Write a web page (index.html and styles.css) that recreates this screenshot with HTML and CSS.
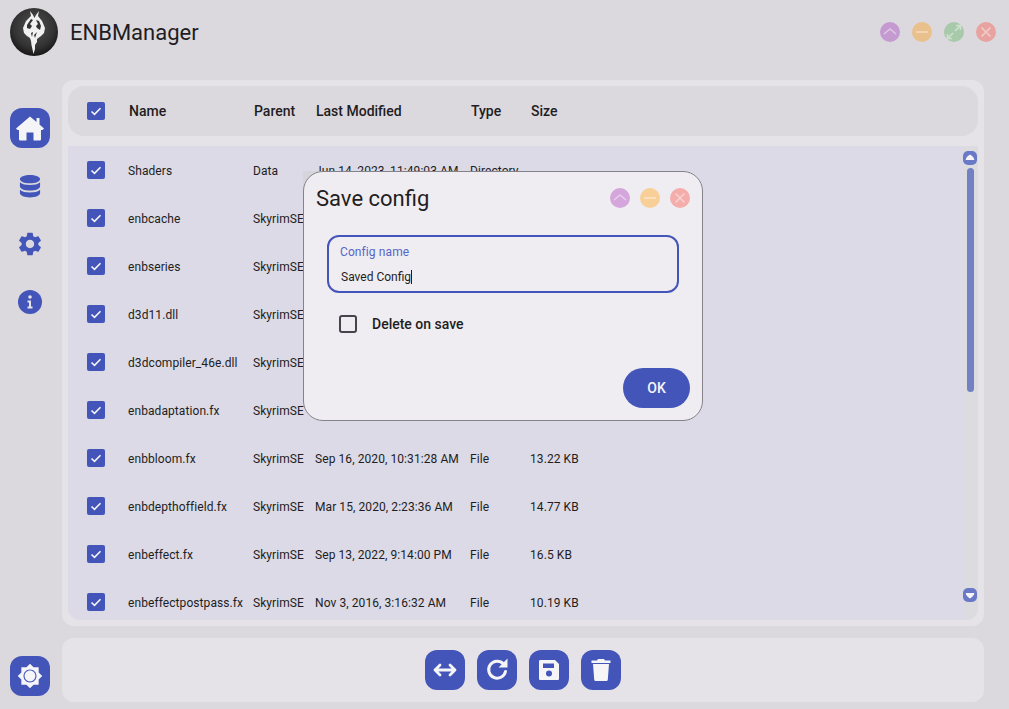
FILE: index.html
```html
<!DOCTYPE html>
<html>
  <head>
    <title>ENBManager</title>
    <meta charset="utf-8" />
    <link rel="stylesheet" href="styles.css">
  </head>
  <body>
    <div class="app">

      <!-- title bar -->
      <div class="titlebar">
        <svg class="logo" viewBox="0 0 48 48">
          <defs>
            <radialGradient id="logoBg" cx="50%" cy="40%" r="60%">
              <stop offset="0" stop-color="#525252"/>
              <stop offset="0.7" stop-color="#333333"/>
              <stop offset="1" stop-color="#171717"/>
            </radialGradient>
          </defs>
          <circle cx="24" cy="24" r="24" fill="url(#logoBg)"/>
          <path fill="#f1f1f1" d="M20 3L21 8L16 13L13 20L14 25L17 28L20 30L21 33L21.500 37L23.500 46L25 41L25 37L27 34L27 31L31 28L34 25L35 20L32 13L28 8L29 3L26 7L24.500 10L23 7Z"/>
          <path fill="#333333" d="M21 11L23 12L20 16L22 18L20 21L17 20L17 17Z"/>
          <path fill="#333333" d="M26 12L29 13L31 18L30 22L27 20L26 18L28 16Z"/>
          <path fill="#333333" d="M21 25L23 24L22 29ZM27 24L25 30L24 27Z"/>
        </svg>
        <div class="app-title">ENBManager</div>
        <div class="win-btns">
          <div class="win-btn purple"><svg viewBox="0 0 20 20"><path d="M4 12l6-5 6 5"/></svg></div>
          <div class="win-btn orange"><svg viewBox="0 0 20 20"><path d="M4 10h12"/></svg></div>
          <div class="win-btn green"><svg viewBox="0 0 20 20"><path d="M11 9l5-5M12 3.500h4.500V8M9 11l-5 5M8 16.500H3.500V12"/></svg></div>
          <div class="win-btn red"><svg viewBox="0 0 20 20"><path d="M5.500 5.500l9 9M14.500 5.500l-9 9"/></svg></div>
        </div>
      </div>

      <div class="content">
        <!-- left menu -->
        <div class="sidebar">
          <div class="nav-btn active">
            <svg width="30" height="30" viewBox="0 0 30 30"><path fill="#f5f5f7" d="M15 3.500l6.500 5.500V5h3v6.500l4.500 4-1.500 1.500H26v9c0 1-.5 1.500-1.500 1.500H18.500v-8h-7v8H5.500C4.500 27.500 4 27 4 26v-9H2.500L1 15.500z"/></svg>
          </div>
          <div class="nav-btn">
            <svg width="22" height="26" viewBox="0 0 24 26"><path fill="#4355b9" d="M12 1c6 0 11 2 11 4.500S18 10 12 10 1 8 1 5.500 6 1 12 1zM1 9c2 2.200 6.500 3 11 3s9-.8 11-3v4.500C23 16 18 18 12 18S1 16 1 13.500zM1 17c2 2.200 6.500 3 11 3s9-.8 11-3v4c0 2.500-5 4.500-11 4.500S1 23.500 1 21z"/></svg>
          </div>
          <div class="nav-btn">
            <svg width="28" height="28" viewBox="0 0 24 24"><path fill="#4355b9" d="M19.140 12.940c.04-.3.06-.61.06-.94 0-.32-.02-.64-.07-.94l2.030-1.580c.18-.14.23-.41.12-.61l-1.920-3.320c-.12-.22-.37-.29-.59-.22l-2.390.96c-.5-.38-1.030-.7-1.620-.94l-.36-2.540c-.04-.24-.24-.41-.48-.41h-3.840c-.24 0-.43.17-.47.41l-.36 2.540c-.59.24-1.130.57-1.620.94l-2.390-.96c-.22-.08-.47 0-.59.22L2.740 8.870c-.12.21-.08.47.12.61l2.030 1.580c-.05.3-.09.63-.09.94s.02.64.07.94l-2.030 1.580c-.18.14-.23.41-.12.61l1.920 3.320c.12.22.37.29.59.22l2.390-.96c.5.38 1.030.7 1.620.94l.36 2.540c.05.24.24.41.48.41h3.840c.24 0 .44-.17.47-.41l.36-2.540c.59-.24 1.130-.56 1.620-.94l2.390.96c.22.08.47 0 .59-.22l1.920-3.320c.12-.22.07-.47-.12-.61l-2.010-1.580zM12 15.600c-1.980 0-3.600-1.620-3.600-3.600s1.620-3.600 3.600-3.600 3.600 1.620 3.600 3.600-1.620 3.600-3.600 3.600z"/></svg>
          </div>
          <div class="nav-btn">
            <svg width="24" height="24" viewBox="0 0 24 24"><circle cx="12" cy="12" r="12" fill="#4355b9"/><circle cx="12" cy="7" r="1.800" fill="#e4e4ea"/><path fill="#e4e4ea" d="M9.500 10.500H13v6h1.500V18.500h-5v-2H11v-4H9.500z"/></svg>
          </div>
        </div>

        <!-- file table -->
        <div class="panel">
          <div class="table-head">
            <div class="check"><svg viewBox="0 0 18 18"><path d="M4.500 9.500l3 2.800 6-6"/></svg></div>
            <div>Name</div>
            <div>Parent</div>
            <div>Last Modified</div>
            <div>Type</div>
            <div>Size</div>
          </div>
          <div class="table-body">
            <div class="rows">
              <div class="row"><div class="check"><svg viewBox="0 0 18 18"><path d="M4.500 9.500l3 2.800 6-6"/></svg></div><div>Shaders</div><div>Data</div><div>Jun 14, 2023, 11:49:03 AM</div><div>Directory</div><div></div></div>
              <div class="row"><div class="check"><svg viewBox="0 0 18 18"><path d="M4.500 9.500l3 2.800 6-6"/></svg></div><div>enbcache</div><div>SkyrimSE</div><div></div><div></div><div></div></div>
              <div class="row"><div class="check"><svg viewBox="0 0 18 18"><path d="M4.500 9.500l3 2.800 6-6"/></svg></div><div>enbseries</div><div>SkyrimSE</div><div></div><div></div><div></div></div>
              <div class="row"><div class="check"><svg viewBox="0 0 18 18"><path d="M4.500 9.500l3 2.800 6-6"/></svg></div><div>d3d11.dll</div><div>SkyrimSE</div><div></div><div></div><div></div></div>
              <div class="row"><div class="check"><svg viewBox="0 0 18 18"><path d="M4.500 9.500l3 2.800 6-6"/></svg></div><div>d3dcompiler_46e.dll</div><div>SkyrimSE</div><div></div><div></div><div></div></div>
              <div class="row"><div class="check"><svg viewBox="0 0 18 18"><path d="M4.500 9.500l3 2.800 6-6"/></svg></div><div>enbadaptation.fx</div><div>SkyrimSE</div><div></div><div></div><div></div></div>
              <div class="row"><div class="check"><svg viewBox="0 0 18 18"><path d="M4.500 9.500l3 2.800 6-6"/></svg></div><div>enbbloom.fx</div><div>SkyrimSE</div><div>Sep 16, 2020, 10:31:28 AM</div><div>File</div><div>13.22 KB</div></div>
              <div class="row"><div class="check"><svg viewBox="0 0 18 18"><path d="M4.500 9.500l3 2.800 6-6"/></svg></div><div>enbdepthoffield.fx</div><div>SkyrimSE</div><div>Mar 15, 2020, 2:23:36 AM</div><div>File</div><div>14.77 KB</div></div>
              <div class="row"><div class="check"><svg viewBox="0 0 18 18"><path d="M4.500 9.500l3 2.800 6-6"/></svg></div><div>enbeffect.fx</div><div>SkyrimSE</div><div>Sep 13, 2022, 9:14:00 PM</div><div>File</div><div>16.5 KB</div></div>
              <div class="row"><div class="check"><svg viewBox="0 0 18 18"><path d="M4.500 9.500l3 2.800 6-6"/></svg></div><div>enbeffectpostpass.fx</div><div>SkyrimSE</div><div>Nov 3, 2016, 3:16:32 AM</div><div>File</div><div>10.19 KB</div></div>
            </div>
            <div class="scrollbar">
              <div class="scroll-btn"><svg viewBox="0 0 14 14"><path d="M7 3.500c2 1 3.500 2.800 4.200 4.500.2.600 0 1-.6 1H3.400c-.6 0-.8-.4-.6-1C3.500 6.300 5 4.500 7 3.500z"/></svg></div>
              <div class="scroll-track"><div class="scroll-thumb"></div></div>
              <div class="scroll-btn"><svg viewBox="0 0 14 14"><path d="M7 10.500c2-1 3.500-2.800 4.200-4.500.2-.6 0-1-.6-1H3.400c-.6 0-.8.4-.6 1 .7 1.700 2.200 3.500 4.200 4.500z"/></svg></div>
            </div>
          </div>
        </div>

        <div class="sidebar-bottom">
          <div class="nav-btn active">
            <svg width="26" height="26" viewBox="0 0 24 24"><path fill="#f5f5f7" d="M20 8.690V4h-4.690L12 .69 8.690 4H4v4.690L.69 12 4 15.310V20h4.690L12 23.310 15.310 20H20v-4.690L23.310 12 20 8.690zM12 18c-3.310 0-6-2.690-6-6s2.690-6 6-6 6 2.690 6 6-2.690 6-6 6zm0-11c-2.760 0-5 2.240-5 5s2.240 5 5 5 5-2.240 5-5-2.240-5-5-5z"/></svg>
          </div>
        </div>

        <!-- actions -->
        <div class="actions">
          <div class="action-btn">
            <svg width="26" height="26" viewBox="0 0 26 26"><path fill="none" stroke="#f5f5f7" stroke-width="2.800" stroke-linecap="round" stroke-linejoin="round" d="M3 13h20M8 8l-5 5 5 5M18 8l5 5-5 5"/></svg>
          </div>
          <div class="action-btn">
            <svg width="26" height="26" viewBox="0 0 26 26"><path fill="none" stroke="#f5f5f7" stroke-width="3" stroke-linecap="round" d="M19.500 7A8.500 8.500 0 1 0 21.500 14.500"/><path fill="#f5f5f7" d="M23.500 1.500v9h-9z"/></svg>
          </div>
          <div class="action-btn">
            <svg width="26" height="26" viewBox="0 0 26 26"><path fill="#f5f5f7" fill-rule="evenodd" d="M4.500 3H19l4 4v14.500c0 1-.5 1.500-1.500 1.500h-17C3.500 23 3 22.500 3 21.500v-17C3 3.500 3.500 3 4.500 3zM7 6.500v4.500h11V6.500zM13 13.500a3 3 0 1 0 0 6 3 3 0 0 0 0-6z"/></svg>
          </div>
          <div class="action-btn">
            <svg width="26" height="26" viewBox="0 0 26 26"><path fill="#f5f5f7" d="M10 2h6l1 1.500h5.500V6h-19V3.500H9zM5 7h16l-1.200 15.500c-.1 1-.8 1.500-1.500 1.500H7.700c-.7 0-1.400-.5-1.500-1.500z"/></svg>
          </div>
        </div>
      </div>

      <!-- save dialog -->
      <div class="dialog-wrap">
        <div class="dialog">
          <div class="dialog-head">
            <div class="dialog-title">Save config</div>
            <div class="win-btns small">
              <div class="win-btn purple"><svg viewBox="0 0 20 20"><path d="M4 12l6-5 6 5"/></svg></div>
              <div class="win-btn orange"><svg viewBox="0 0 20 20"><path d="M4 10h12"/></svg></div>
              <div class="win-btn red"><svg viewBox="0 0 20 20"><path d="M5.500 5.500l9 9M14.500 5.500l-9 9"/></svg></div>
            </div>
          </div>
          <div class="field">
            <div class="field-label">Config name</div>
            <div class="field-value"><span class="caret">Saved Config</span></div>
          </div>
          <div class="check-row">
            <div class="check-empty"></div>
            <div>Delete on save</div>
          </div>
          <div class="dialog-foot">
            <div class="ok-btn">OK</div>
          </div>
        </div>
      </div>

    </div>
  </body>
</html>
```

FILE: styles.css
```css
html, body {
  width: 100%;
  height: 100%;
  margin: 0px;
  overflow: hidden;
}

body {
  background-color: #dbd9de;
  color: #1f1d22;
  font-family: Roboto, "Liberation Sans", sans-serif;
}

.app {
  position: relative;
  width: 1009px;
  height: 709px;
}

/* title bar */
.titlebar {
  display: flex;
  align-items: center;
  height: 64px;
  margin-bottom: 16px;
  padding-left: 10px;
  padding-right: 13px;
  box-sizing: border-box;
}

.logo {
  width: 48px;
  height: 48px;
}

.app-title {
  margin-left: 12px;
  font-size: 22px;
}

.win-btns {
  display: flex;
  gap: 12px;
  margin-left: auto;
}

.win-btns.small {
  gap: 10px;
}

.win-btn {
  width: 20px;
  height: 20px;
  border-radius: 50%;
}

.win-btn svg {
  display: block;
  fill: none;
  stroke: rgba(255, 255, 255, 0.45);
  stroke-width: 1.6;
}

.win-btn.purple { background-color: #c49ad0; }
.win-btn.orange { background-color: #eac08c; }
.win-btn.green { background-color: #a8c9aa; }
.win-btn.red { background-color: #e8a3a0; }

.dialog .win-btn.purple { background-color: #d4a6dc; }
.dialog .win-btn.orange { background-color: #f7cf97; }
.dialog .win-btn.red { background-color: #f4adaa; }

/* main grid */
.content {
  display: grid;
  grid-template-columns: 62px 922px;
  grid-template-rows: 546px 64px;
  row-gap: 12px;
}

.sidebar {
  display: flex;
  flex-direction: column;
  gap: 18px;
  padding: 28px 0 0 10px;
}

.sidebar-bottom {
  padding: 18px 0 0 10px;
}

.nav-btn {
  display: flex;
  align-items: center;
  justify-content: center;
  width: 40px;
  height: 40px;
  border-radius: 12px;
}

.nav-btn.active {
  background-color: #4355b9;
}

/* file table */
.panel {
  padding: 6px;
  background-color: #e5e3e8;
  border-radius: 12px;
  box-sizing: border-box;
}

.table-head, .row {
  display: grid;
  align-items: center;
  padding-left: 19px;
}

.table-head {
  grid-template-columns: 42px 125px 62px 155px 60px 1fr;
  height: 50px;
  margin-bottom: 10px;
  font-size: 14px;
  font-weight: 500;
  background-color: #dbd9de;
  border-radius: 16px;
}

.table-body {
  display: flex;
  height: 474px;
  overflow: hidden;
  background-color: #dbdae6;
  border-bottom-right-radius: 12px;
  border-bottom-left-radius: 12px;
}

.rows {
  flex: 1;
}

.row {
  grid-template-columns: 41px 125px 62px 155px 60px 1fr;
  height: 48px;
  font-size: 12px;
  letter-spacing: 0.08px;
  white-space: nowrap;
}

.row div:not(.check) {
  padding-top: 2px;
}

.check {
  width: 18px;
  height: 18px;
  background-color: #4355b9;
  border-radius: 2px;
}

.check svg {
  display: block;
  fill: none;
  stroke: #f5f5f7;
  stroke-width: 1.6;
}

/* scrollbar */
.scrollbar {
  display: flex;
  flex-direction: column;
  width: 14px;
  padding: 5px 1px 18px 0;
  background-color: #dcdbe0;
}

.scroll-btn {
  width: 14px;
  height: 14px;
  background-color: #6a79c6;
  border-radius: 5px;
}

.scroll-btn svg {
  display: block;
  fill: #f5f5f7;
}

.scroll-track {
  flex: 1;
  padding: 3px 3.5px;
}

.scroll-thumb {
  width: 7px;
  height: 224px;
  background-color: #7280c4;
  border-radius: 4px;
}

/* action bar */
.actions {
  display: flex;
  align-items: center;
  justify-content: center;
  gap: 12px;
  background-color: #e5e3e8;
  border-radius: 12px;
}

.action-btn {
  display: flex;
  align-items: center;
  justify-content: center;
  width: 40px;
  height: 40px;
  background-color: #4355b9;
  border-radius: 12px;
}

/* dialog */
.dialog-wrap {
  position: absolute;
  left: 303px;
  top: 171px;
  background: linear-gradient(#d6d5dc, #d6d5dc) top left / 20px 20px no-repeat;
}

.dialog {
  display: flex;
  flex-direction: column;
  width: 400px;
  height: 250px;
  box-sizing: border-box;
  background-color: #efedf1;
  border: 1px solid #85838a;
  border-radius: 20px;
}

.dialog-head {
  display: flex;
  align-items: center;
  justify-content: space-between;
  height: 30px;
  margin-top: 11px;
  padding: 0 12px;
}

.dialog-title {
  font-size: 22px;
}

.field {
  height: 58px;
  margin: 22px 23px 0 23px;
  padding-left: 11px;
  box-sizing: border-box;
  border: 2px solid #4355b9;
  border-radius: 12px;
}

.field-label {
  margin-top: 8px;
  font-size: 12px;
  line-height: 14px;
  letter-spacing: 0.1px;
  color: #5666c8;
}

.field-value {
  margin-top: 11px;
  padding-left: 1px;
  font-size: 12px;
  line-height: 14px;
}

.caret {
  border-right: 1px solid #1f1d22;
}

.check-row {
  display: flex;
  align-items: center;
  gap: 15px;
  margin: 22px 0 0 35px;
  font-size: 14px;
  font-weight: 500;
}

.check-empty {
  width: 18px;
  height: 18px;
  box-sizing: border-box;
  border: 2px solid #45444a;
  border-radius: 3px;
}

.dialog-foot {
  display: flex;
  justify-content: flex-end;
  margin-top: auto;
  padding: 0 12px 12px 0;
}

.ok-btn {
  width: 67px;
  height: 40px;
  font-size: 14px;
  font-weight: 500;
  line-height: 40px;
  text-align: center;
  color: #f5f5f7;
  background-color: #4355b9;
  border-radius: 20px;
}
```
